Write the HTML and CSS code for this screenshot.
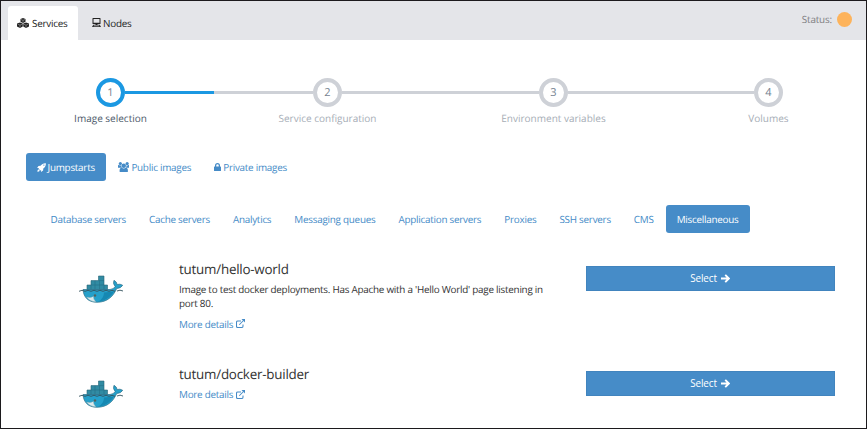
FILE: index.html
```html
<!DOCTYPE html>
<html lang="en">
<head>
<meta charset="utf-8">
<title>Image selection</title>
<link rel="stylesheet" href="styles.css">
</head>
<body>
<svg class="defs" width="0" height="0" aria-hidden="true">
  <symbol id="cubes" viewBox="0 0 24 20">
    <path d="M12 0l5 2v5.500l-5 2.500-5-2.500V2z M6 9l5.500 2.200v6L6 20l-6-2.800v-6z M18 9l6 2.200v6L18 20l-5.500-2.800v-6z"/>
    <path class="cut" d="M8 3l4 1.800L16 3M12 5v4M1 12l5 2.300 5-2.300M6 14.500V19M13 12l5 2.300 5-2.300M18 14.500V19"/>
  </symbol>
  <symbol id="desktop" viewBox="0 0 18 18">
    <path fill-rule="evenodd" d="M2 0h14q1 0 1 1v10q0 1-1 1H2q-1 0-1-1V1q0-1 1-1zm1 2v7.500h12V2z M7 12h4v1.500H7z M2.500 13.500h13L18 18H0zm1.300 1.300l-.7 1.700h11.800l-.7-1.700z"/>
  </symbol>
  <symbol id="rocket" viewBox="0 0 18 18">
    <path fill-rule="evenodd" d="M17.700.3C13 0 10 1.600 7 5.400L3 5.800.2 10l3.700-.2-.8 1.600 3.500 3.500 1.600-.8-.2 3.700 4.200-2.800.4-4C16.400 8 18 5 17.700.3zM13.800 2.800a1.400 1.400 0 1 1 0 2.800 1.400 1.400 0 0 1 0-2.800zM2.700 12.300Q.8 13.500.7 17.300q3.800-.1 5-2z"/>
  </symbol>
  <symbol id="group" viewBox="0 0 22 20">
    <circle cx="4.500" cy="3" r="3"/><circle cx="17.500" cy="3" r="3"/><circle cx="11" cy="7" r="4.300"/>
    <path d="M0 11V8q0-3 2-2.500 2.500 1.500 4 .8Q6 9 7.500 11zM22 11V8q0-3-2-2.500-2.500 1.500-4 .8.500 2.700-1 4.700zM3 17q0-6 4-6 4 2.500 8 0 4 0 4 6 0 3-3 3H6q-3 0-3-3z"/>
  </symbol>
  <symbol id="lock" viewBox="0 0 14 16">
    <path fill-rule="evenodd" d="M1 7h1V5a5 5 0 0 1 10 0v2h1q1 0 1 1v7q0 1-1 1H1q-1 0-1-1V8q0-1 1-1zm3.500 0h5V5a2.500 2.500 0 0 0-5 0z"/>
  </symbol>
  <symbol id="external" viewBox="0 0 18 18">
    <path class="line" d="M10 4H3.500Q1 4 1 6.500v8Q1 17 3.500 17h8q2.500 0 2.500-2.500V11M6.500 11.500L15 3"/>
    <path d="M11 0h7v7l-2.300-2.300-2.400-2.400z"/>
  </symbol>
  <symbol id="arrow" viewBox="0 0 16 16">
    <path class="bold" d="M0 8h13M7.500 1.500L14 8l-6.500 6.500"/>
  </symbol>
  <symbol id="whale" viewBox="0 0 45 28">
    <path fill="#318ba3" stroke="#2a6577" stroke-width=".6" d="M8 14.500V10h4V5.600h7.500V1h5.500v9h3.500v4.500z"/>
    <path fill="none" stroke="#236b80" stroke-width=".5" d="M12 10h13M19.500 5.600H25M12 10v4.500M16 5.600v9M20.500 5.600v9M25 10v4.500"/>
    <path fill="#25a0ca" stroke="#2f6f86" stroke-width=".7" d="M4 14.500h27q3.700-.3 5.200-3Q33.500 8.800 35 5.300q2.700 1.300 3.200 4.200 2.800-1 5.500.8-1.500 3-6 3.200C34.500 21 28.500 27.300 18 27.300 9 27.300 4.500 22 4 14.500z"/>
    <path fill="#1688b2" d="M25 17.500l10-1C31 22.500 26 26 19 26.800 23 24.500 25 21.500 25 17.500z"/>
    <path fill="#dce9eb" stroke="#6499a8" stroke-width=".4" d="M7.500 22q4 1.300 7-.8-.2 3.500 2.500 5.700-6.500-.3-9.500-4.900z"/>
    <circle cx="16" cy="20.500" r="1.200" fill="#54615c"/>
    <path fill="none" stroke="#34545f" stroke-width=".9" d="M0 16.300l3-1 3 1 3-1 3 1 3-1 3 1 3-1 3 1 3-1 3 1 3-1 3 1M38 16l3-.8 3 .8"/>
  </symbol>
</svg>
<div class="page">
  <header class="topbar">
    <nav class="tabs">
      <a class="tab active"><svg class="i-cubes"><use href="#cubes"/></svg><span>Services</span></a>
      <a class="tab"><svg class="i-desktop"><use href="#desktop"/></svg><span>Nodes</span></a>
    </nav>
    <div class="status"><span>Status:</span><i class="dot"></i></div>
  </header>
  <ol class="steps">
    <li class="step current"><div class="track"><b>1</b></div><span class="label">Image selection</span></li>
    <li class="step"><div class="track"><b>2</b></div><span class="label">Service configuration</span></li>
    <li class="step"><div class="track"><b>3</b></div><span class="label">Environment variables</span></li>
    <li class="step"><div class="track"><b>4</b></div><span class="label">Volumes</span></li>
  </ol>
  <nav class="pills sources">
    <a class="pill active"><svg class="i-rocket"><use href="#rocket"/></svg><span>Jumpstarts</span></a>
    <a class="pill"><svg class="i-group"><use href="#group"/></svg><span>Public images</span></a>
    <a class="pill"><svg class="i-lock"><use href="#lock"/></svg><span>Private images</span></a>
  </nav>
  <nav class="pills categories">
    <a class="pill">Database servers</a>
    <a class="pill">Cache servers</a>
    <a class="pill">Analytics</a>
    <a class="pill">Messaging queues</a>
    <a class="pill">Application servers</a>
    <a class="pill">Proxies</a>
    <a class="pill">SSH servers</a>
    <a class="pill">CMS</a>
    <a class="pill active">Miscellaneous</a>
  </nav>
  <main class="images">
    <article class="image">
      <svg class="logo"><use href="#whale"/></svg>
      <div class="info">
        <h2>tutum/hello-world</h2>
        <p>Image to test docker deployments. Has Apache with a 'Hello World' page listening in<br>port 80.</p>
        <a class="more">More details<svg><use href="#external"/></svg></a>
      </div>
      <button class="select">Select<svg><use href="#arrow"/></svg></button>
    </article>
    <article class="image">
      <svg class="logo"><use href="#whale"/></svg>
      <div class="info">
        <h2>tutum/docker-builder</h2>
        <a class="more">More details<svg><use href="#external"/></svg></a>
      </div>
      <button class="select">Select<svg><use href="#arrow"/></svg></button>
    </article>
  </main>
</div>
</body>
</html>
```
FILE: styles.css
```css
* { box-sizing: border-box; }
body { margin: 0; font: 9.900px/14px "Open Sans", sans-serif; letter-spacing: -.25px; color: #333; background: #fff; text-rendering: geometricPrecision; }
.defs { position: absolute; }
svg { fill: currentColor; flex: none; }
.cut { fill: none; stroke: #fff; stroke-width: .7; }
.line { fill: none; stroke: currentColor; stroke-width: 2.1; }
.bold { fill: none; stroke: currentColor; stroke-width: 3.4; }
.page { width: 867px; height: 429px; border: 1px solid #1c1a1d; overflow: hidden; }
.topbar { height: 38.500px; background: #e4e5e9; display: flex; justify-content: space-between; padding: 5px 14px 0 7px; }
.tabs { display: flex; }
.tab { height: 33px; display: flex; align-items: center; gap: 2px; padding: 0 9px; color: #222; border-radius: 3px 3px 0 0; }
.tab.active { background: #fff; width: 70px; height: 34px; margin-right: 5px; padding-bottom: 1px; gap: 3px; }
.i-cubes { width: 12px; height: 10px; }
.i-desktop { width: 9px; height: 9px; }
.status { display: flex; align-items: center; gap: 5px; height: 27px; color: #808083; letter-spacing: -.15px; }
.status span { position: relative; top: -1px; }
.dot { width: 15px; height: 15px; border-radius: 50%; background: #fdb35b; }
.steps { list-style: none; margin: 38px 0 0; padding: 0 0 0 6px; display: grid; grid-template-columns: 207px 227px 225px 205px; height: 75.500px; align-items: start; font-size: 10px; letter-spacing: 0; }
.step { text-align: center; color: #a6adb6; }
.track { display: flex; align-items: center; height: 30px; color: #758391; }
.track::before, .track::after { content: ""; flex: 1; height: 3px; background: #ced1d7; }
.track b { width: 29px; height: 29px; border: 4px solid #ced1d7; border-radius: 50%; font-size: 11px; font-weight: 400; line-height: 22px; }
.step:first-child .track::before, .step:last-child .track::after { background: none; }
.current { color: #4b5869; }
.current .track::after { background: #1b98e2; }
.current b { border-color: #1b98e2; }
.label { display: block; margin-top: 3px; }
.pills { display: flex; color: #458bc7; height: 28px; }
.pill { display: flex; align-items: center; white-space: nowrap; padding: 0 11.500px; }
.pill.active { background: #468cc8; color: #fff; border-radius: 3px; }
.sources { margin-left: 24.500px; gap: 1px; }
.sources .pill { gap: 2px; padding: 0 11px; }
.i-rocket { width: 9px; height: 9px; }
.i-group { width: 11.500px; height: 10.500px; }
.i-lock { width: 7px; height: 8px; }
.categories { margin: 23.500px 0 0 38px; }
.categories .pill.active { padding: 0 11px; margin-left: .5px; }
.images { padding: 30px 31px 0 78px; }
.image { display: grid; grid-template-columns: 100px 406.500px 249px; align-items: start; height: 105px; }
.logo { width: 45px; height: 28px; margin-top: 12px; }
h2 { margin: -2px 0 0; font-size: 13.400px; line-height: 17px; font-weight: 400; letter-spacing: -.23px; }
p { margin: 5.500px 0 6.500px; line-height: 13.500px; }
.more { display: flex; align-items: center; gap: 3px; color: #458bc7; margin-top: 4.500px; }
.more svg { width: 9px; height: 9px; }
.select { width: 249px; height: 25px; margin-top: 3.400px; padding: 0; border: 1px solid #4184be; background: #468cc8; color: #fff; font: inherit; letter-spacing: -.1px; display: flex; justify-content: center; align-items: center; gap: 4px; }
.select svg { width: 9px; height: 9px; }
```
